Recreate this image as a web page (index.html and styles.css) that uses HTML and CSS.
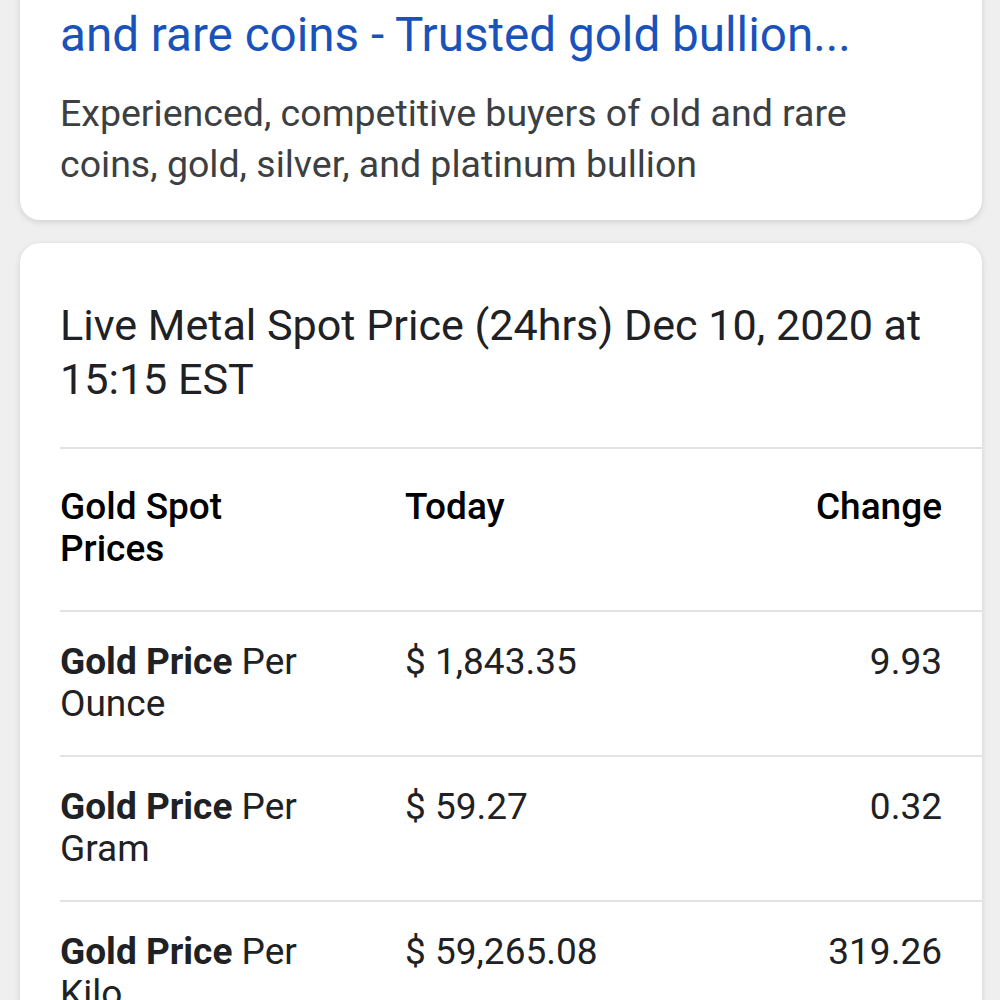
FILE: index.html
```html
<!DOCTYPE html>
<html lang="en">
<head>
    <meta charset="UTF-8">
    <meta name="viewport" content="width=device-width, initial-scale=1.0">
    <title>gold spot price - Search</title>
    <link rel="stylesheet" href="styles.css">
</head>
<body>
    <div class="results">
        <div class="card result">
            <a class="result-title" href="#">We Buy Gold, Silver, Platinum Bullion, Old<br>and rare coins - Trusted gold bullion...</a>
            <p class="result-desc">Experienced, competitive buyers of old and rare coins, gold, silver, and platinum bullion</p>
        </div>

        <div class="card spot">
            <h2 class="spot-heading">Live Metal Spot Price (24hrs) Dec 10, 2020 at 15:15 EST</h2>
            <div class="spot-table">
                <div class="row head">
                    <div class="cell name">Gold Spot Prices</div>
                    <div class="cell">Today</div>
                    <div class="cell change">Change</div>
                </div>
            </div>
        </div>
    </div>

    <script>
        const table = document.querySelector('.spot-table');

        const prices = [
            { unit: 'Ounce', today: '$ 1,843.35', change: '9.93' },
            { unit: 'Gram', today: '$ 59.27', change: '0.32' },
            { unit: 'Kilo', today: '$ 59,265.08', change: '319.26' }
        ];

        prices.forEach(p => {
            const row = document.createElement('div');
            row.classList.add('row');
            row.innerHTML =
                '<div class="cell name"><b>Gold Price</b> Per ' + p.unit + '</div>' +
                '<div class="cell">' + p.today + '</div>' +
                '<div class="cell change">' + p.change + '</div>';
            table.appendChild(row);
        });
    </script>
</body>
</html>
```

FILE: styles.css
```css
body {
    margin: 0;
    padding: 0;
    background-color: #efefef;
    font-family: Roboto, "Noto Sans", Arial, sans-serif;
    color: #202124;
}

.results {
    padding: 0 18px 0 20px;
    display: flex;
    flex-direction: column;
    gap: 23px;
}

.card {
    background-color: white;
    border-radius: 20px;
    box-shadow: 0 2px 6px rgba(0, 0, 0, 0.13);
}

.result {
    margin-top: -100px;
    padding: 35px 40px 30px;
}

.result-title {
    display: block;
    font-size: 47.6px;
    line-height: 67px;
    color: #1a52bc;
    text-decoration: none;
    white-space: nowrap;
}

.result-desc {
    margin: 19px 0 0;
    font-size: 37.5px;
    line-height: 51px;
    color: #3c4043;
}

.spot {
    padding: 56px 0 0 40px;
    overflow: hidden;
}

.spot-heading {
    margin: 0 40px 40px 0;
    font-size: 43.1px;
    line-height: 54px;
    font-weight: 400;
    color: #202124;
}

.spot-table {
    display: flex;
    flex-direction: column;
}

.row {
    display: grid;
    grid-template-columns: 260px 1fr auto;
    column-gap: 85px;
    padding: 29px 40px 30px 0;
    border-top: 2px solid #e3e3e3;
    font-size: 37px;
    line-height: 42px;
    color: #202124;
}

.row.head {
    padding-top: 37px;
    padding-bottom: 40px;
    font-weight: 500;
    color: #000;
}

.cell.change {
    text-align: right;
}

.name b {
    font-weight: 700;
}
```
